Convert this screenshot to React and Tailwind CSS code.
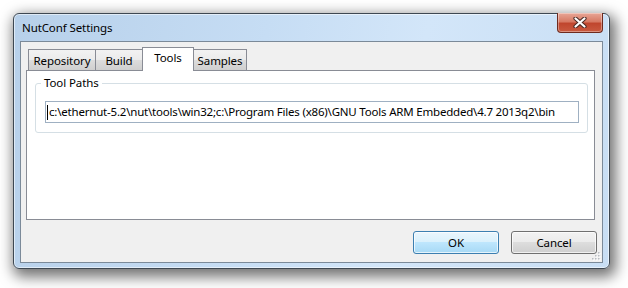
import React from "react";

const font = "font-['Noto_Sans',sans-serif] tracking-[-0.1px]";

const tabs = [
  { label: "Repository", width: "w-[68px]" },
  { label: "Build", width: "w-[48px]" },
  { label: "Tools", width: "w-[52px]", active: true },
  { label: "Samples", width: "w-[54px]" },
];

// Win7 caption close button
const CloseButton = () => (
  <div className="-mt-px flex h-[20px] w-[46px] items-center justify-center self-start rounded-b-[4px] border border-t-0 border-[#6e2a1e] bg-[linear-gradient(to_bottom,#e8a696_0%,#d77a64_45%,#c0462e_55%,#c95a40_100%)] shadow-[inset_0_0_0_1px_rgba(255,255,255,0.35)]">
    <svg width="14" height="11" viewBox="0 0 14 11">
      <path d="M2.5 1.5 L11.5 9.5 M11.5 1.5 L2.5 9.5" stroke="#4a2a24" strokeWidth="4.2" strokeLinecap="round" />
      <path d="M2.5 1.5 L11.5 9.5 M11.5 1.5 L2.5 9.5" stroke="#ffffff" strokeWidth="2.2" strokeLinecap="round" />
    </svg>
  </div>
);

const Tab = ({ tab }) =>
  tab.active ? (
    <div
      className={`${tab.width} relative z-10 -mb-px -ml-px flex h-[24px] items-start justify-center border border-b-0 border-[#898c95] bg-white pt-[2px] text-[11.5px] leading-[16px] text-black`}
    >
      {tab.label}
    </div>
  ) : (
    <div
      className={`${tab.width} -ml-px flex h-[21px] items-start justify-center border border-b-0 border-[#898c95] bg-[linear-gradient(to_bottom,#f2f2f2_0%,#ebebeb_50%,#dddddd_50%,#cfcfcf_100%)] pt-[3px] text-[11.5px] leading-[16px] text-black first:ml-0`}
    >
      {tab.label}
    </div>
  );

const Grip = () => (
  <svg className="absolute bottom-[1px] right-[1px]" width="10" height="10" viewBox="0 0 10 10">
    {[
      [7, 1],
      [4, 4],
      [7, 4],
      [1, 7],
      [4, 7],
      [7, 7],
    ].map(([x, y]) => (
      <g key={`${x}-${y}`}>
        <rect x={x + 1} y={y + 1} width="1.5" height="1.5" fill="#ffffff" />
        <rect x={x} y={y} width="1.5" height="1.5" fill="#b8bcc2" />
      </g>
    ))}
  </svg>
);

export default function App() {
  return (
    <div className={`${font} h-[288px] w-[628px] overflow-hidden bg-white pl-[13px] pt-[13px]`}>
      {/* window frame */}
      <div className="flex h-[256px] w-[597px] flex-col rounded-[6px] border border-[#3e4852] bg-[linear-gradient(100deg,#b7d0ea_0%,#c6ddf4_40%,#d3e6f9_65%,#c8def4_100%)] px-[6px] pb-[5px] shadow-[inset_0_0_0_1px_rgba(255,255,255,0.55),3px_5px_14px_3px_rgba(0,0,0,0.55)]">
        {/* title bar */}
        <div className="flex h-[27px] items-center justify-between">
          <span className="ml-[2px] text-[11.5px] leading-[16px] text-black">NutConf Settings</span>
          <CloseButton />
        </div>

        {/* client area */}
        <div className="relative flex h-[222px] flex-col border border-[#7b8a99] bg-[#f0f0f0] pt-[5px]">
          <div className="ml-[5px] mr-[7px] flex flex-col">
            <div className="ml-[2px] flex h-[23px] items-end">
              {tabs.map((tab) => (
                <Tab key={tab.label} tab={tab} />
              ))}
            </div>

            <div className="h-[150px] border border-[#898c95] bg-white">
              <fieldset className="ml-[8px] mr-[6px] mt-[4px] rounded-[3px] border border-[#d5dfe5] pb-[9px]">
                <legend className="ml-[5px] px-[3px] text-[11.5px] leading-[16px] text-black">Tool Paths</legend>
                <div className="ml-[9px] mr-[8px] mt-[10px] flex h-[22px] items-center border border-[#9fb0c2] bg-white pl-[1px] text-[11.5px] leading-[16px] tracking-[-0.2px] text-black">
                  <span className="h-[15px] border-l border-black" />
                  <span className="ml-[1px] whitespace-nowrap">
                    c:\ethernut-5.2\nut\tools\win32;c:\Program Files (x86)\GNU Tools ARM Embedded\4.7 2013q2\bin
                  </span>
                </div>
              </fieldset>
            </div>
          </div>

          <div className="mt-[11px] flex justify-end gap-[12px] pr-[5px]">
            <button className="h-[23px] w-[86px] rounded-[3px] border border-[#3c7fb1] bg-[linear-gradient(to_bottom,#eaf6fd_0%,#d9f0fc_50%,#bee6fd_50%,#a7d9f5_100%)] text-[11.5px] leading-[16px] text-black shadow-[inset_0_0_0_1px_rgba(255,255,255,0.7)]">
              OK
            </button>
            <button className="h-[23px] w-[86px] rounded-[3px] border border-[#707070] bg-[linear-gradient(to_bottom,#f2f2f2_0%,#ebebeb_50%,#dddddd_50%,#cfcfcf_100%)] text-[11.5px] leading-[16px] text-black shadow-[inset_0_0_0_1px_rgba(255,255,255,0.7)]">
              Cancel
            </button>
          </div>

          <Grip />
        </div>
      </div>
    </div>
  );
}
